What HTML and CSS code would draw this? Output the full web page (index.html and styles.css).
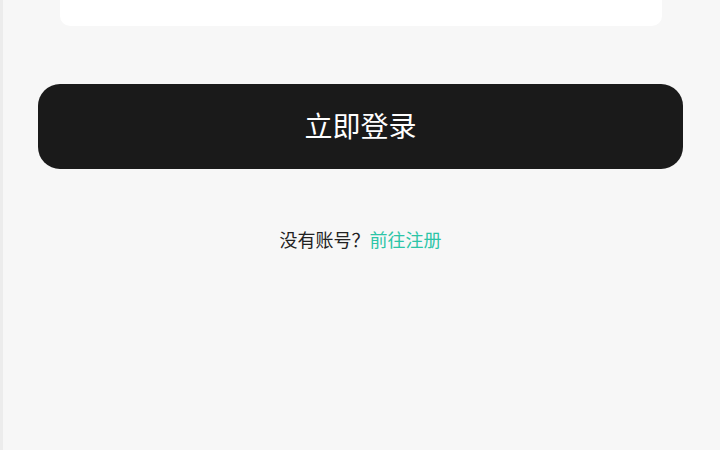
FILE: index.html
```html
<!DOCTYPE html>
<html lang="zh-CN">
<head>
<meta charset="utf-8">
<title>登录</title>
<link rel="stylesheet" href="styles.css">
</head>
<body>
<div class="page">
  <div class="form">
    <div class="card"></div>
    <button class="login-btn" type="button">立即登录</button>
    <p class="register">没有账号？<a class="register-link" href="#">前往注册</a></p>
  </div>
</div>
</body>
</html>
```
FILE: styles.css
```css
html, body {
  margin: 0;
  padding: 0;
  height: 100%;
}
body {
  background: #f7f7f7;
  font-family: "Noto Sans CJK SC", "Noto Sans", sans-serif;
}
.page {
  min-height: 100%;
  border-left: 3px solid #ececec;
  box-sizing: border-box;
  padding: 0 37px 0 35px;
}
.form {
  display: flex;
  flex-direction: column;
}
.card {
  height: 26px;
  margin: 0 21px 0 22px;
  background: #ffffff;
  border-radius: 0 0 10px 10px;
}
.login-btn {
  margin-top: 58px;
  height: 85px;
  padding: 0 0 3px;
  border: none;
  border-radius: 22px;
  background: #1a1a1a;
  color: #ffffff;
  font-family: "Noto Sans CJK SC", sans-serif;
  font-size: 28px;
  cursor: pointer;
}
.register {
  margin: 58px 0 0;
  text-align: center;
  font-size: 18px;
  line-height: 24px;
  color: #222222;
}
.register-link {
  color: #2cc5a7;
  text-decoration: none;
}
```
